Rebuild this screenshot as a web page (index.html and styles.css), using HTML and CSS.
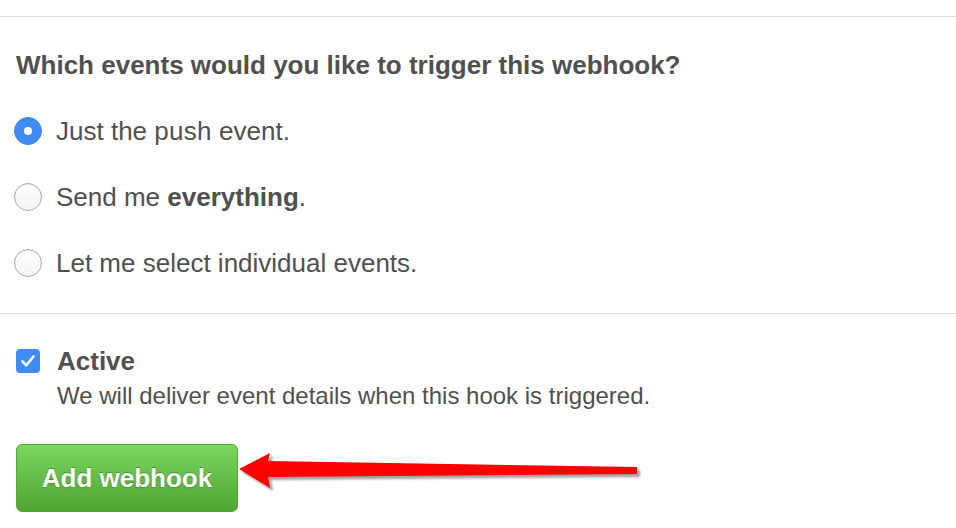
FILE: index.html
```html
<!DOCTYPE html>
<html>
<head>
<meta charset="utf-8">
<link rel="stylesheet" href="styles.css">
</head>
<body>
<div class="page">
  <hr class="rule rule-top">
  <section class="events">
    <h2 class="heading">Which events would you like to trigger this webhook?</h2>
    <div class="options">
      <label class="option"><span class="radio radio-on"></span><span>Just the <span class="code">push</span> event.</span></label>
      <label class="option"><span class="radio"></span><span>Send me <strong>everything</strong>.</span></label>
      <label class="option"><span class="radio"></span><span>Let me select individual events.</span></label>
    </div>
  </section>
  <hr class="rule">
  <section class="active">
    <div class="active-row">
      <span class="checkbox">
        <svg width="24" height="24" viewBox="0 0 24 24"><path d="M6.5 12.5 L10.3 16.3 L17.5 7.5" fill="none" stroke="#fff" stroke-width="2.6" stroke-linecap="round" stroke-linejoin="round"/></svg>
      </span>
      <span class="active-label">Active</span>
    </div>
    <p class="active-note">We will deliver event details when this hook is triggered.</p>
    <div class="actions">
      <button class="btn">Add webhook</button>
    </div>
  </section>
  <svg class="arrow" width="956" height="528" viewBox="0 0 956 528">
    <defs>
      <filter id="sh" x="-10%" y="-50%" width="120%" height="200%">
        <feGaussianBlur stdDeviation="1.2"/>
      </filter>
    </defs>
    <polygon points="239,469 270,453 268,461 637,467 637,474 268,477 270,488" fill="#555" opacity="0.55" transform="translate(3,3)" filter="url(#sh)"/>
    <polygon points="239,469 270,453 268,461 637,467 637,474 268,477 270,488" fill="#ff0000"/>
  </svg>
</div>
</body>
</html>
```
FILE: styles.css
```css
html, body {
  margin: 0;
  padding: 0;
  background: #fff;
}
.page {
  position: relative;
  width: 956px;
  height: 528px;
  overflow: hidden;
  font-family: "Liberation Sans", Arial, Helvetica, sans-serif;
  color: #505050;
}
.rule {
  margin: 0;
  border: 0;
  border-top: 1px solid #dcdcdc;
  height: 0;
}
.rule-top {
  margin-top: 16px;
}
.events {
  padding: 32px 16px 34px 16px;
}
.heading {
  margin: 0;
  font-size: 26px;
  line-height: 32px;
  font-weight: bold;
  color: #505050;
}
.options {
  display: flex;
  flex-direction: column;
  gap: 34px;
  margin-top: 34px;
  margin-left: -2px;
}
.option {
  display: flex;
  align-items: center;
  gap: 14px;
  font-size: 26px;
  line-height: 32px;
  height: 32px;
}
.option strong {
  font-weight: bold;
}
.code {
  letter-spacing: 0.3px;
}
.radio {
  box-sizing: border-box;
  width: 28px;
  height: 28px;
  border-radius: 50%;
  border: 1px solid #ababab;
  background: linear-gradient(#fff, #f4f4f4);
  box-shadow: inset 0 1px 1px rgba(0,0,0,0.06);
  flex: none;
  display: flex;
  align-items: center;
  justify-content: center;
}
.radio-on {
  border-color: #3c86f0;
  background: #3f8cf4;
  box-shadow: none;
}
.radio-on::after {
  content: "";
  width: 8px;
  height: 8px;
  border-radius: 50%;
  background: #fff;
}
.active {
  padding: 31px 16px 0 16px;
}
.active-row {
  display: flex;
  align-items: center;
  gap: 17px;
  height: 32px;
}
.checkbox {
  width: 24px;
  height: 24px;
  border-radius: 4px;
  background: #3f8cf4;
  flex: none;
  display: block;
}
.checkbox svg {
  display: block;
}
.active-label {
  font-size: 26px;
  line-height: 32px;
  font-weight: bold;
}
.active-note {
  margin: 3px 0 0 41px;
  font-size: 24px;
  line-height: 32px;
}
.actions {
  margin-top: 32px;
}
.btn {
  box-sizing: border-box;
  width: 222px;
  height: 68px;
  padding: 0;
  border: 1px solid #57a63b;
  border-radius: 6px;
  background: linear-gradient(#7ad65f, #50a434);
  color: #fff;
  font-family: "Liberation Sans", Arial, Helvetica, sans-serif;
  font-size: 26px;
  font-weight: bold;
  text-shadow: 0 -1px 0 rgba(0,0,0,0.25), 0 1px 2px rgba(0,0,0,0.2);
  cursor: pointer;
}
.arrow {
  position: absolute;
  left: 0;
  top: 0;
  pointer-events: none;
}
```
